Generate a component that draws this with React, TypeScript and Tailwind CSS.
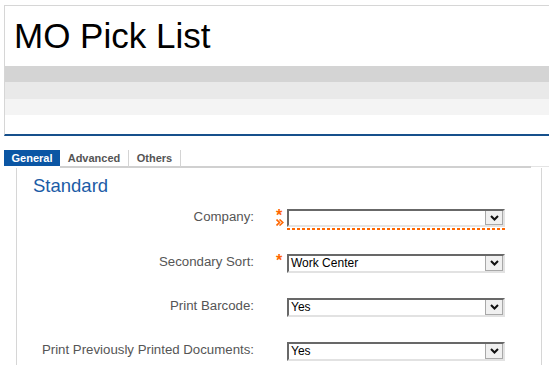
import React from 'react';

type Field = {
  label: string;
  value: string;
  required?: boolean;
  invalid?: boolean;
  rowHeight: string;
};

const fields: Field[] = [
  { label: 'Company:', value: '', required: true, invalid: true, rowHeight: 'h-[45px]' },
  { label: 'Secondary Sort:', value: 'Work Center', required: true, rowHeight: 'h-[44px]' },
  { label: 'Print Barcode:', value: 'Yes', rowHeight: 'h-[44px]' },
  { label: 'Print Previously Printed Documents:', value: 'Yes', rowHeight: 'h-[23px]' },
];

function Chevron() {
  return (
    <svg width="9" height="6" viewBox="0 0 9 6" className="block">
      <polyline points="1,1 4.5,4.5 8,1" fill="none" stroke="#111" strokeWidth="2" />
    </svg>
  );
}

function Select({ value, short }: { value: string; short?: boolean }) {
  return (
    <div
      className={`flex w-[218px] ${short ? 'h-[18px]' : 'h-[19px]'} border-t-2 border-l-2 border-t-[#686868] border-l-[#686868] border-r-2 border-b-2 border-r-[#e2e2e2] border-b-[#e2e2e2] bg-white`}
    >
      <div className="flex-1 pl-[2px] text-[12px] leading-[15px] text-black">{value}</div>
      <div className="flex w-[18px] items-center justify-center border-x border-b border-[#a8a8a8] bg-[#f0f0f0]">
        <Chevron />
      </div>
    </div>
  );
}

function RequiredMark({ invalid }: { invalid?: boolean }) {
  return (
    <div className="flex flex-col items-start pl-[22px]">
      <span className="-mt-[1px] h-[10px] text-[16px] font-bold leading-[16px] text-[#ff6600]">*</span>
      {invalid && (
        <svg width="8" height="7" viewBox="0 0 8 7" className="mt-[1px] block">
          <polyline points="0.5,0.5 3.5,3.5 0.5,6.5" fill="none" stroke="#ff6600" strokeWidth="1.6" />
          <polyline points="3.5,0.5 6.8,3.5 3.5,6.5" fill="none" stroke="#ff6600" strokeWidth="1.6" />
        </svg>
      )}
    </div>
  );
}

export default function App() {
  return (
    <div className="h-[365px] overflow-hidden bg-white pt-[5px] pl-[4px] font-['Liberation_Sans',Arial,sans-serif]">
      {/* page header */}
      <div className="border-t border-l border-[#d6d6d6] border-b-2 border-b-[#16508c]">
        <div className="h-[60px] pl-[9px] pt-[12px]">
          <h1 className="text-[35px] leading-[35px] text-black">MO Pick List</h1>
        </div>
        <div className="h-[16px] bg-[#d4d4d4]" />
        <div className="h-[17px] bg-[#e9e9e9]" />
        <div className="h-[16px] bg-[#f4f4f4]" />
        <div className="h-[19px] bg-white" />
      </div>

      {/* tabs */}
      <div className="mt-[14px] flex h-[18px] items-stretch text-[11px] font-bold">
        <div className="flex w-[56px] items-start justify-center border-b-2 border-white bg-[#0b56a4] bg-clip-padding leading-[16px] text-white">
          General
        </div>
        <div className="flex w-[69px] items-start justify-center border-r border-b-2 border-r-[#d4d4d4] border-b-[#d0d0d0] leading-[16px] text-[#555]">
          Advanced
        </div>
        <div className="flex w-[52px] items-start justify-center border-r border-b-2 border-r-[#d4d4d4] border-b-[#d0d0d0] leading-[16px] text-[#555]">
          Others
        </div>
        <div className="w-[350px] border-b-2 border-[#d0d0d0]" />
        <div className="mb-[1px] flex-1 border-b border-[#e4e4e4]" />
      </div>

      {/* panel */}
      <div className="ml-[12px] min-h-[197px] w-[526px] border-x border-[#d6d6d6] pl-[16px]">
        <h2 className="pt-[7px] text-[18.5px] leading-[22px] text-[#1b5ca6]">Standard</h2>
        <div className="mt-[12px] flex flex-col">
          {fields.map((f) => (
            <div key={f.label} className={`flex items-start ${f.rowHeight}`}>
              <div className="w-[221px] shrink-0 whitespace-nowrap text-right text-[13.25px] leading-[15px] text-[#555]">
                {f.label}
              </div>
              <div className="w-[33px] shrink-0">{f.required && <RequiredMark invalid={f.invalid} />}</div>
              <div className="flex flex-col">
                <Select value={f.value} short={f.invalid} />
                {f.invalid && (
                  <div className="mt-[1px] h-[2px] w-[218px] bg-[repeating-linear-gradient(90deg,#ff6600_0_3px,transparent_3px_5px)]" />
                )}
              </div>
            </div>
          ))}
        </div>
      </div>
    </div>
  );
}
